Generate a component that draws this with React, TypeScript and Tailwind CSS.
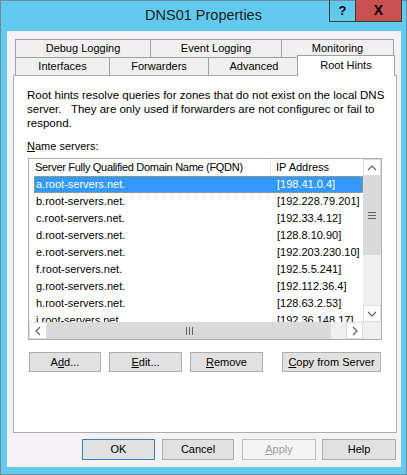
import type { ReactNode } from 'react';

const servers: [string, string][] = [
  ['a.root-servers.net.', '[198.41.0.4]'],
  ['b.root-servers.net.', '[192.228.79.201]'],
  ['c.root-servers.net.', '[192.33.4.12]'],
  ['d.root-servers.net.', '[128.8.10.90]'],
  ['e.root-servers.net.', '[192.203.230.10]'],
  ['f.root-servers.net.', '[192.5.5.241]'],
  ['g.root-servers.net.', '[192.112.36.4]'],
  ['h.root-servers.net.', '[128.63.2.53]'],
  ['i.root-servers.net.', '[192.36.148.17]'],
  ['j.root-servers.net.', '[192.58.128.30]'],
];

// small chevron used on the scroll arrows
function Chevron({ dir }: { dir: 'up' | 'down' | 'left' | 'right' }) {
  const d = {
    up: 'M1 6 L5 2 L9 6',
    down: 'M1 2 L5 6 L9 2',
    left: 'M6 1 L2 5 L6 9',
    right: 'M2 1 L6 5 L2 9',
  }[dir];
  const vertical = dir === 'up' || dir === 'down';
  return (
    <svg
      width={vertical ? 10 : 8}
      height={vertical ? 8 : 10}
      viewBox={vertical ? '0 0 10 8' : '0 0 8 10'}
      fill="none"
      stroke="#606060"
      strokeWidth={1.2}
    >
      <path d={d} />
    </svg>
  );
}

function Tab({ children, className }: { children: ReactNode; className: string }) {
  return (
    <div
      className={
        'flex h-[18px] items-center justify-center border-l border-t border-[#a0a0a0] bg-[#f0f0f0] ' +
        className
      }
    >
      {children}
    </div>
  );
}

function Button({
  children,
  className,
  disabled,
  primary,
}: {
  children: ReactNode;
  className: string;
  disabled?: boolean;
  primary?: boolean;
}) {
  let look = 'border-[#adadad] bg-[#e1e1e1] text-black';
  if (primary) look = 'border-[#3c7fb1] bg-[#e1e1e1] text-black';
  if (disabled) look = 'border-[#bfbfbf] bg-[#f4f4f4] text-[#a0a0a0]';
  return (
    <div className={'flex items-center justify-center border ' + look + ' ' + className}>
      {children}
    </div>
  );
}

export default function App() {
  return (
    <div className="flex h-[475px] w-[407px] flex-col border border-[#6f8a98] bg-[#62c9ef] font-['Liberation_Sans',Arial,sans-serif] text-[11px] text-black">
      {/* title bar */}
      <div className="relative flex h-[30px] items-center justify-center">
        <span className="text-[14.5px] text-[#1e1e1e]">DNS01 Properties</span>
        <div className="absolute right-[4px] top-[-1px] flex h-[22px]">
          <div className="flex w-[27px] items-center justify-center border-x border-b border-[#3b3b3b] text-[13px] font-bold">
            ?
          </div>
          <div className="flex w-[46px] items-center justify-center border-b border-r border-[#3b3b3b] bg-[#c75050] text-[14px] font-bold">
            X
          </div>
        </div>
      </div>

      {/* client area */}
      <div className="ml-[6px] flex h-[436px] w-[394px] flex-col bg-[#f4f2f5] pl-[6px] pt-[8px]">
        <div className="flex pl-[2px]">
          <Tab className="w-[135px]">Debug Logging</Tab>
          <Tab className="w-[131px]">Event Logging</Tab>
          <Tab className="w-[113px] border-r">Monitoring</Tab>
        </div>
        <div className="flex h-[18px] items-end pl-[2px]">
          <Tab className="w-[94px]">Interfaces</Tab>
          <Tab className="w-[99px]">Forwarders</Tab>
          <Tab className="w-[91px]">Advanced</Tab>
          <div className="relative z-10 mb-[-1px] ml-[-2px] flex h-[21px] w-[98px] items-start justify-center border-x border-t border-[#a0a0a0] bg-white pt-[1px]">
            Root Hints
          </div>
        </div>

        {/* tab page */}
        <div className="flex h-[358px] w-[384px] flex-col border border-[#adadad] bg-white px-[13px] pt-[12px]">
          <p className="w-[356px] whitespace-nowrap text-[11.5px] leading-[14px]">
            Root hints resolve queries for zones that do not exist on the local DNS
            <br />
            server. &nbsp; They are only used if forwarders are not configurec or fail to
            <br />
            respond.
          </p>
          <p className="mt-[9px] leading-[14px]">
            <span className="underline">N</span>ame servers:
          </p>

          {/* list view */}
          <div className="ml-[1px] mt-[5px] flex h-[182px] w-[354px] flex-col border border-[#abadb3]">
            <div className="flex h-[163px]">
              <div className="flex w-[334px] flex-col overflow-hidden">
                <div className="flex h-[17px] shrink-0 items-center">
                  <div className="flex h-full w-[242px] items-center whitespace-nowrap border-r border-[#e5e5e5] pl-[6px] tracking-[-0.3px]">
                    Server Fully Qualified Domain Name (FQDN)
                  </div>
                  <div className="pl-[5px]">IP Address</div>
                </div>
                <div className="flex flex-col pl-[5px]">
                  {servers.map(([name, ip], i) => (
                    <div
                      key={name}
                      className={
                        i === 0
                          ? 'flex h-[17px] shrink-0 items-center whitespace-nowrap bg-[#3399ff] text-white outline-1 outline-offset-[-1px] outline-dotted outline-[#e89a3c]'
                          : 'flex h-[17px] shrink-0 items-center whitespace-nowrap'
                      }
                    >
                      <div className="w-[237px] pl-[2px]">{name}</div>
                      <div className="pl-[6px]">{ip}</div>
                    </div>
                  ))}
                </div>
              </div>
              {/* vertical scrollbar */}
              <div className="flex w-[18px] flex-col bg-[#f0f0f0]">
                <div className="flex h-[17px] items-center justify-center border border-[#dcdcdc] bg-white">
                  <Chevron dir="up" />
                </div>
                <div className="flex h-[79px] flex-col items-center justify-center gap-[2px] bg-[#dadada]">
                  <div className="h-px w-[8px] bg-[#606060]" />
                  <div className="h-px w-[8px] bg-[#606060]" />
                  <div className="h-px w-[8px] bg-[#606060]" />
                </div>
                <div className="flex-1" />
                <div className="flex h-[17px] items-center justify-center border border-[#dcdcdc] bg-white">
                  <Chevron dir="down" />
                </div>
              </div>
            </div>
            {/* horizontal scrollbar */}
            <div className="flex h-[17px]">
              <div className="flex w-[18px] items-center justify-center border border-[#dcdcdc] bg-white">
                <Chevron dir="left" />
              </div>
              <div className="flex w-[284px] items-center justify-center gap-[2px] bg-[#dadada]">
                <div className="h-[8px] w-px bg-[#606060]" />
                <div className="h-[8px] w-px bg-[#606060]" />
                <div className="h-[8px] w-px bg-[#606060]" />
              </div>
              <div className="w-[15px] bg-[#f0f0f0]" />
              <div className="flex w-[17px] items-center justify-center border border-[#dcdcdc] bg-white">
                <Chevron dir="right" />
              </div>
              <div className="w-[18px] bg-[#f0f0f0]" />
            </div>
          </div>

          <div className="mt-[12px] flex">
            <Button className="ml-[2px] h-[20px] w-[72px]">
              A<span className="underline">d</span>d...
            </Button>
            <Button className="ml-[8px] h-[20px] w-[73px]">
              <span className="underline">E</span>dit...
            </Button>
            <Button className="ml-[8px] h-[20px] w-[73px]">
              <span className="underline">R</span>emove
            </Button>
            <Button className="ml-[19px] h-[20px] w-[99px]">
              <span className="underline">C</span>opy from Server
            </Button>
          </div>
        </div>

        {/* dialog buttons */}
        <div className="mt-[6px] flex justify-end pr-[5px]">
          <Button primary className="h-[21px] w-[73px]">
            OK
          </Button>
          <Button className="ml-[7px] h-[21px] w-[72px]">Cancel</Button>
          <Button disabled className="ml-[8px] h-[21px] w-[74px]">
            <span className="underline">A</span>pply
          </Button>
          <Button className="ml-[6px] h-[21px] w-[74px]">Help</Button>
        </div>
      </div>
    </div>
  );
}
